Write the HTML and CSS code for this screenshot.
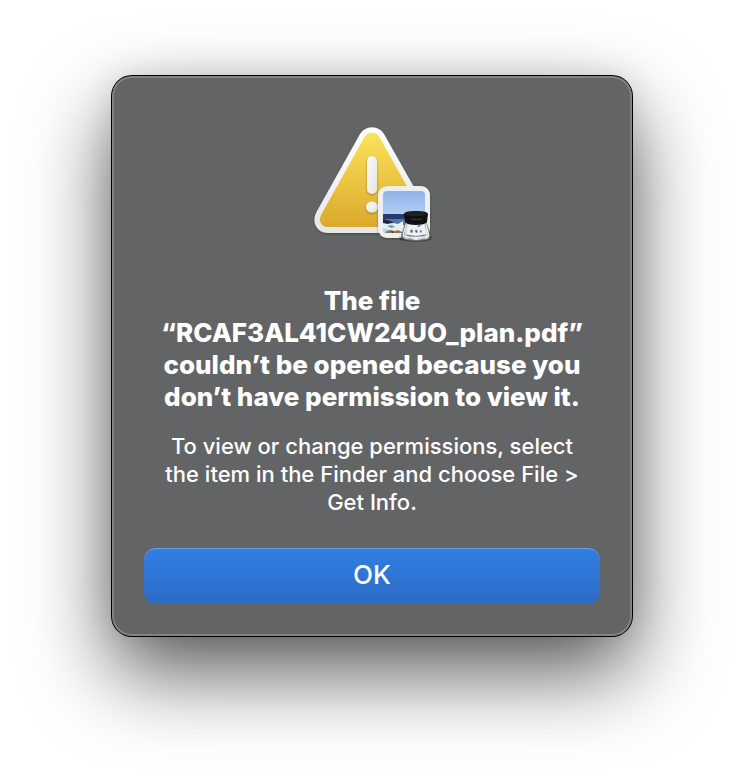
FILE: index.html
```
<!DOCTYPE html>
<html lang="en">
<head>
    <meta charset="UTF-8">
    <meta name="viewport" content="width=device-width, initial-scale=1.0">
    <title>Permission Alert</title>
    <link rel="stylesheet" href="styles.css">
</head>
<body>
    <main>
        <div class="alert" role="alertdialog" aria-labelledby="alert-title" aria-describedby="alert-message">
            <svg class="alert-icon" viewBox="0 0 128 128" aria-hidden="true">
                <defs>
                    <linearGradient id="yellow" x1="0" y1="0" x2="0" y2="1">
                        <stop offset="0" stop-color="#fbe35a"/>
                        <stop offset="1" stop-color="#dba82c"/>
                    </linearGradient>
                    <linearGradient id="rim" x1="0" y1="0" x2="0" y2="1">
                        <stop offset="0" stop-color="#ffffff"/>
                        <stop offset="1" stop-color="#e6e6e6"/>
                    </linearGradient>
                    <linearGradient id="mark" x1="0" y1="0" x2="1" y2="1">
                        <stop offset="0" stop-color="#fafaf8"/>
                        <stop offset="1" stop-color="#e4e4e0"/>
                    </linearGradient>
                    <linearGradient id="sky" x1="0" y1="0" x2="0" y2="1">
                        <stop offset="0" stop-color="#90b3ec"/>
                        <stop offset="1" stop-color="#b5cdf0"/>
                    </linearGradient>
                    <linearGradient id="glass" x1="0" y1="0" x2="1" y2="0">
                        <stop offset="0" stop-color="#4c4c4c"/>
                        <stop offset="0.15" stop-color="#d8d8d6"/>
                        <stop offset="0.3" stop-color="#a4a6a6"/>
                        <stop offset="0.5" stop-color="#eeeeec"/>
                        <stop offset="0.75" stop-color="#b4b4b2"/>
                        <stop offset="0.88" stop-color="#e4e4e2"/>
                        <stop offset="1" stop-color="#3c3c3c"/>
                    </linearGradient>
                    <filter id="shadow" x="-10%" y="-10%" width="120%" height="125%">
                        <feDropShadow dx="0" dy="1" stdDeviation="1" flood-opacity="0.35"/>
                    </filter>
                    <clipPath id="photo">
                        <rect x="75" y="75" width="42" height="42" rx="4"/>
                    </clipPath>
                </defs>

                <!-- warning triangle -->
                <path filter="url(#shadow)" fill="url(#rim)" d="M52 18C55 13.500 59 11.300 64 11.300S73 13.500 76 18L120 96C125 106 119 117 108 117H20C9 117 3 106 8.500 96Z"/>
                <path fill="url(#yellow)" d="M56.500 21C58 18 61 16.700 64 16.700S70 18 71.500 21L115 99C118 105 114.500 111 108 111H20C13.500 111 10 105 13 99Z"/>
                <g filter="url(#shadow)" fill="url(#mark)">
                    <rect x="59" y="40" width="10" height="38" rx="5"/>
                    <ellipse cx="64" cy="91" rx="6" ry="5.500"/>
                </g>

                <!-- photo badge -->
                <rect filter="url(#shadow)" fill="#efefef" x="70" y="70" width="52" height="52" rx="9"/>
                <g clip-path="url(#photo)">
                    <rect fill="url(#sky)" x="75" y="75" width="42" height="24"/>
                    <rect fill="#253a74" x="75" y="98" width="42" height="6"/>
                    <rect fill="#54779f" x="75" y="103" width="42" height="14"/>
                    <path fill="#20263a" d="M75 103l4 1 3 1 3 1v1l-5 1-5-1z"/>
                    <path fill="#e6f0f5" d="M75 107l4 1 6-1 5 1 5-3v4l3 1v7H75z"/>
                    <path fill="#6f9ac0" d="M79 110l5-1 3 2-4 1z"/>
                    <path fill="#b1dae0" d="M75 112l5 1 4 2-3 2h-6z"/>
                    <path fill="#957550" d="M77 116l5-2 5 1 3-1 4 2v1H77z"/>
                    <path fill="#302a28" d="M83 115l3 1-2 1z"/>
                </g>

                <!-- loupe -->
                <path fill="#000000" opacity="0.3" d="M91 120q17 8 33 0l-1 4q-15 4-31 0z"/>
                <path fill="url(#glass)" stroke="#555555" stroke-width="0.500" d="M98 105L93.500 119Q93 122 96 123Q108 126 120 123Q123 122 122.500 119L118 105Z"/>
                <path fill="#eef2f5" d="M100 107l-2 11q10 3 20 0l-2-11z"/>
                <path fill="#5a6c80" d="M102 115l2-2 1 3-2 1zM107 115l1-2 2 3-2 1zM109 110l3-1 1 1-3 1zM112 114l2 1-1 2-1-1z"/>
                <path fill="none" stroke="#ffffff" stroke-width="1" d="M97 112l-2 8q13 4 26 0l-2-7"/>
                <path fill="none" stroke="#777777" stroke-width="0.800" d="M98 119q10 3 20 0"/>
                <path fill="#101010" d="M96 98Q96 95 108 95T120 98L119 106Q117 109 108 109T97 106Z"/>
                <ellipse fill="#222222" cx="108" cy="98" rx="11" ry="2"/>
                <path fill="none" stroke="#3c3c3c" d="M103 103q5 1 11 0"/>
            </svg>
            <h1 id="alert-title">The file<br>“RCAF3AL41CW24UO_plan.pdf”<br>couldn’t be opened because you<br>don’t have permission to view it.</h1>
            <p id="alert-message">To view or change permissions, select<br>the item in the Finder and choose File &gt;<br>Get Info.</p>
            <button type="button">OK</button>
        </div>
    </main>
</body>
</html>
```
FILE: styles.css
```
* {
    box-sizing: border-box;
}

body {
    margin: 0;
    font-family: Inter, "Liberation Sans", sans-serif;
    background-color: #fff;
    color: #fff;
}

main {
    display: flex;
    justify-content: center;
    padding: 76px 16px 148px;
}

.alert {
    display: flex;
    flex-direction: column;
    align-items: center;
    width: 100%;
    max-width: 520px;
    padding: 40px 32px 32px;
    text-align: center;
    background-color: #636466;
    border-radius: 20px;
    box-shadow:
        inset 0 0 0 2px rgba(255, 255, 255, 0.2),
        0 0 0 1px #000,
        0 36px 84px rgba(0, 0, 0, 0.66),
        0 0 32px rgba(0, 0, 0, 0.1);
}

.alert-icon {
    width: 128px;
    height: 128px;
    margin-bottom: 41px;
}

h1 {
    margin: 0 0 19px;
    font-size: 26px;
    font-weight: 800;
    line-height: 32px;
}

p {
    margin: 0 0 32px;
    font-size: 22px;
    font-weight: 500;
    line-height: 28px;
}

button {
    width: 100%;
    height: 56px;
    padding: 0 0 4px;
    font-family: inherit;
    font-size: 26px;
    font-weight: 500;
    color: #fff;
    background: linear-gradient(#317fe3, #2c6bc5);
    border: none;
    border-radius: 12px;
    box-shadow: inset 0 1px 0 rgba(255, 255, 255, 0.25);
    cursor: pointer;
}

button:hover {
    filter: brightness(1.1);
}
```
